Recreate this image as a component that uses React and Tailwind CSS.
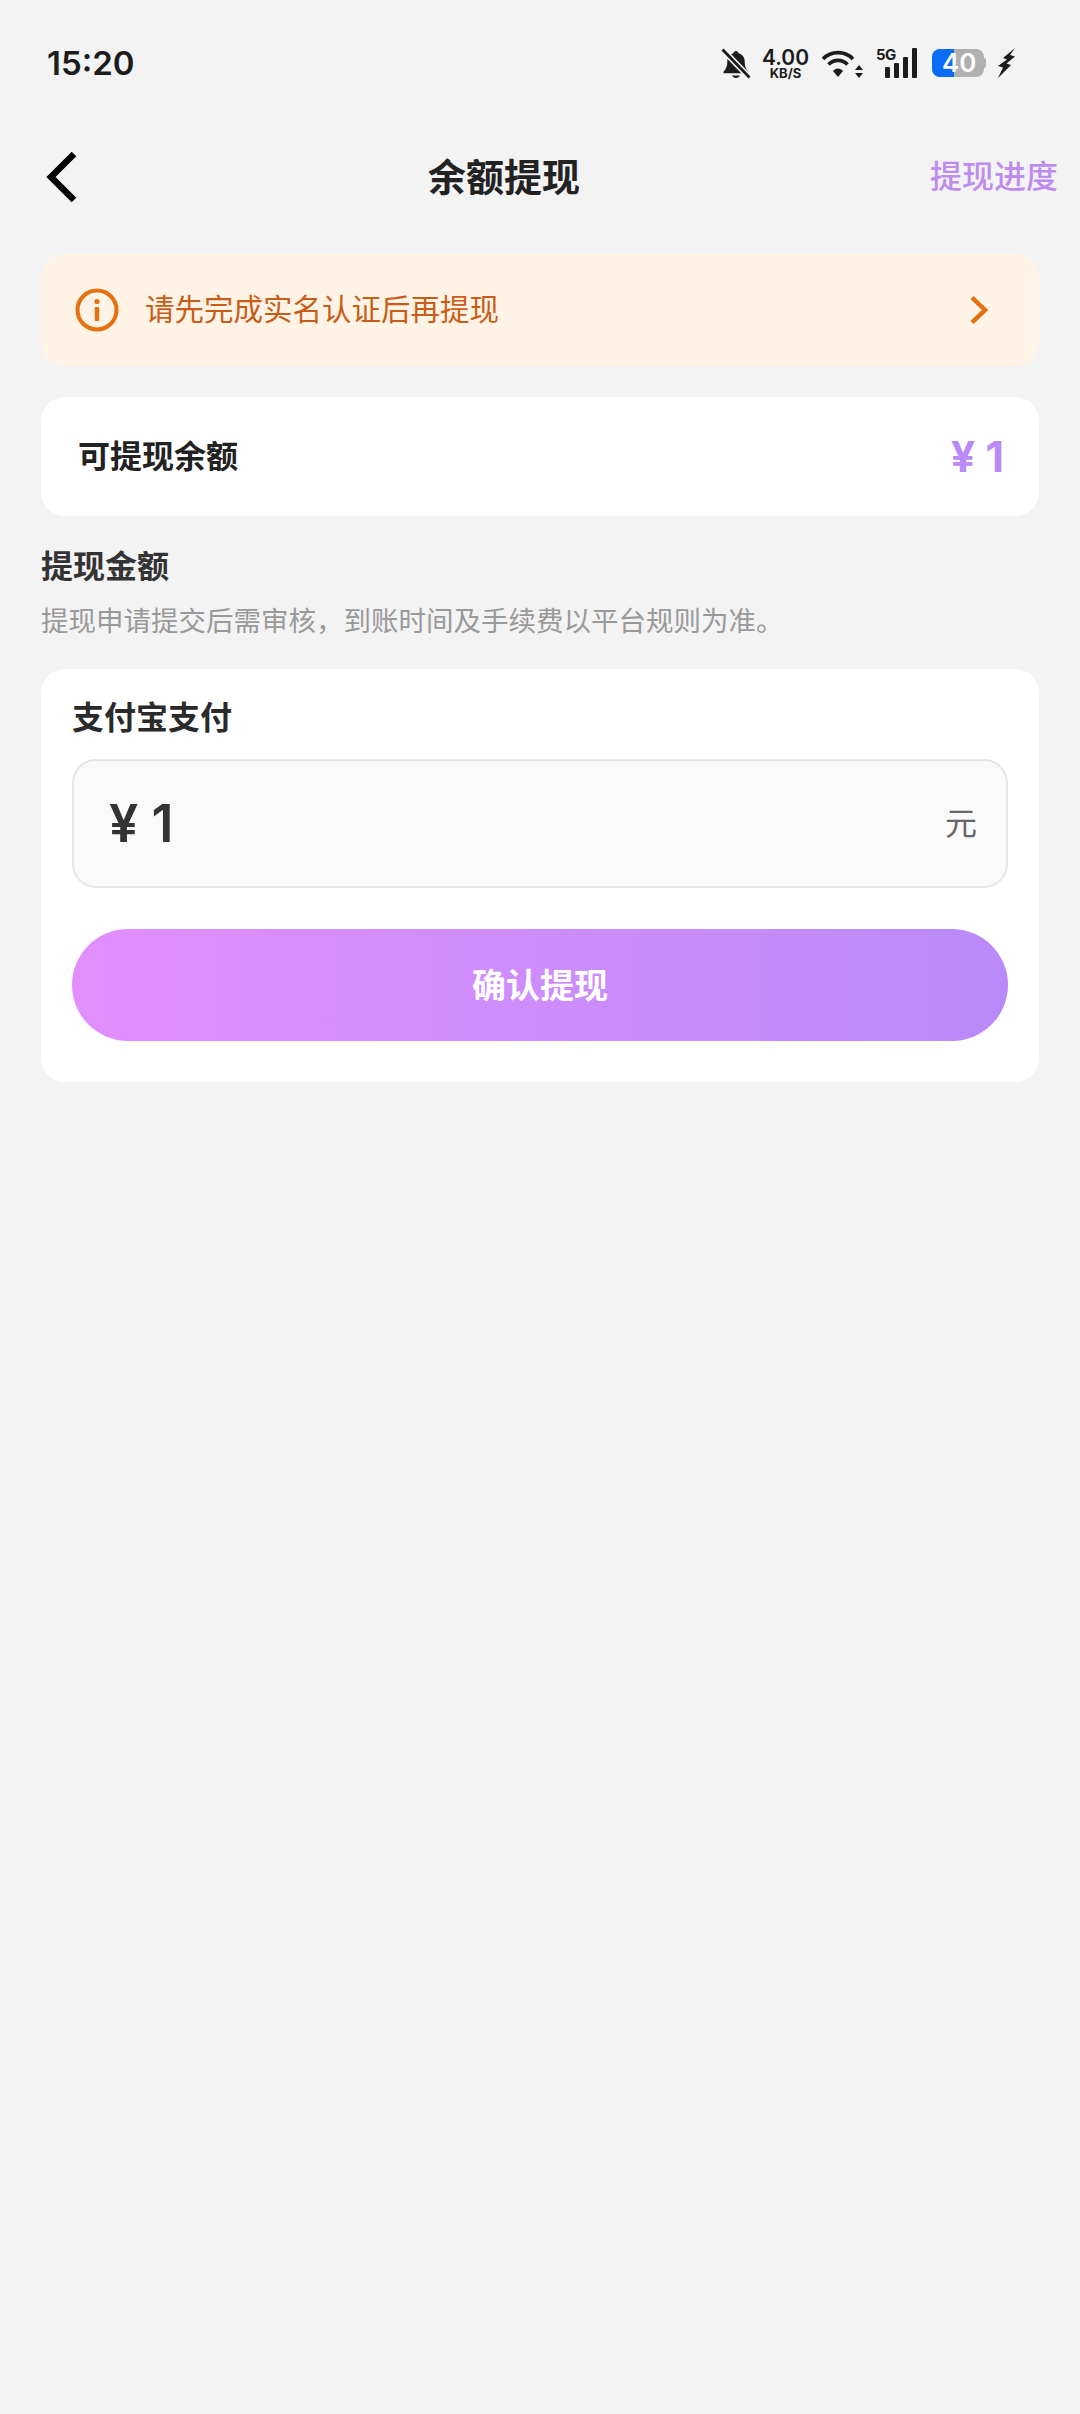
const fontStack = "font-['Inter','Noto_Sans_CJK_SC',sans-serif]"

function StatusBar() {
  return (
    <div className="flex h-[126px] items-center pl-[47px] pr-[64px]">
      <span className="text-[33px] font-semibold leading-none text-[#1c1c1c]">15:20</span>
      <div className="ml-auto flex items-center">
        {/* muted bell */}
        <svg width="30" height="31" viewBox="0 0 30 31" className="mt-[1px]">
          <path d="M15 3c1.4 0 2.4 1 2.5 2.2 4 1 6.2 4.3 6.2 8.3 0 4 .8 7.4 3.6 10.2v1.6H2.5v-1.6C5.4 21 6.3 17.5 6.3 13.5c0-4 2.200-7.300 6.200-8.300C12.600 4 13.600 3 15 3z" fill="#1c1c1c" />
          <path d="M11 27.500h8c-.6 1.500-2.200 2.500-4 2.500s-3.400-1-4-2.500z" fill="#1c1c1c" />
          <path d="M1.500 1.500 28.500 29.500" stroke="#f3f3f4" strokeWidth="6" />
          <path d="M1.500 1.500 28.500 29.500" stroke="#1c1c1c" strokeWidth="2.800" />
        </svg>
        {/* speed */}
        <div className="ml-[9px] flex w-[51px] flex-col items-center">
          <span className="h-[19px] text-[21px] font-semibold leading-[19px] text-[#1c1c1c]">4.00</span>
          <span className="mt-[1px] h-[11px] text-[13px] font-bold leading-[11px] text-[#1c1c1c]">KB/S</span>
        </div>
        {/* wifi */}
        <svg width="42" height="32" viewBox="0 0 42 32" className="ml-[10px]">
          <path d="M2 12C10 3.500 24 3.500 32 12" fill="none" stroke="#1c1c1c" strokeWidth="3.600" />
          <path d="M7.500 17.500C12.500 12 21.500 12 26.500 17.500" fill="none" stroke="#1c1c1c" strokeWidth="3.600" />
          <path d="M12 24c2.500-3.500 7.500-3.500 10 0l-5 6z" fill="#1c1c1c" />
          <path d="M38 18l4 5h-8zM38 31l4-5h-8z" fill="#1c1c1c" />
        </svg>
        {/* 5G signal */}
        <div className="relative ml-[13px] h-[32px] w-[41px]">
          <span className="absolute left-0 top-0 text-[15px] font-bold leading-[15px] tracking-[-0.5px] text-[#1c1c1c]">5G</span>
          <svg width="41" height="32" viewBox="0 0 41 32" className="absolute left-0 top-0">
            <rect x="9" y="20" width="5" height="11" rx="1" fill="#1c1c1c" />
            <rect x="18" y="16" width="5" height="15" rx="1" fill="#1c1c1c" />
            <rect x="27" y="10" width="5" height="21" rx="1" fill="#1c1c1c" />
            <rect x="36" y="1" width="5" height="30" rx="1" fill="#1c1c1c" />
          </svg>
        </div>
        {/* battery */}
        <div className="relative ml-[15px] h-[28px] w-[54px]">
          <div className="flex h-full w-[52px] overflow-hidden rounded-[8px] bg-[#b0b0b0]">
            <div className="h-full w-[22px] bg-[#0a6cf5]" />
          </div>
          <div className="absolute right-0 top-[9px] h-[10px] w-[2px] rounded-r-sm bg-[#b0b0b0]" />
          <span className="absolute left-[10px] top-0 text-[26px] font-semibold leading-[28px] text-white">40</span>
        </div>
        {/* charging bolt */}
        <svg width="19" height="32" viewBox="0 0 19 32" className="ml-[11px]">
          <path d="M18 1 6 11l4 1.500L1 19l5 1.500L1 31l13-13-4.500-1.500L18 9.500l-5-1.500z" fill="#1c1c1c" />
        </svg>
      </div>
    </div>
  )
}

function Header() {
  return (
    <div className="flex h-[102px] items-center justify-between pl-[46px] pr-[22px]">
      <svg width="32" height="52" viewBox="0 0 32 52">
        <path d="M28 3 5 26l23 23" fill="none" stroke="#000" strokeWidth="6.500" />
      </svg>
      <h1 className="text-[38px] font-bold leading-none text-[#222]">余额提现</h1>
      <span className="text-[32px] font-medium leading-none text-[#bd8cee]">提现进度</span>
    </div>
  )
}

export default function App() {
  return (
    <div className={`min-h-[2414px] bg-[#f3f3f4] ${fontStack}`}>
      <StatusBar />
      <Header />

      <div className="mx-[41px] mt-[26px]">
        {/* Realname notice */}
        <div className="flex h-[112px] items-center rounded-[24px] bg-[#fff3e6] pl-[34px] pr-[50px]">
          <svg width="44" height="44" viewBox="0 0 44 44">
            <circle cx="22" cy="22" r="19.500" fill="none" stroke="#e5700f" strokeWidth="4" />
            <circle cx="22" cy="13.500" r="2.600" fill="#e5700f" />
            <rect x="19.800" y="19" width="4.400" height="14" rx="1" fill="#e5700f" />
          </svg>
          <span className="ml-[26px] text-[29.500px] leading-none text-[#c95c17]">请先完成实名认证后再提现</span>
          <svg width="20" height="30" viewBox="0 0 20 30" className="ml-auto">
            <path d="M3 2.500 16 15 3 27.500" fill="none" stroke="#e5700f" strokeWidth="4.500" />
          </svg>
        </div>

        {/* Balance */}
        <div className="mt-[31px] flex h-[119px] items-center justify-between rounded-[24px] bg-white pl-[37px] pr-[35px]">
          <span className="text-[32px] font-bold leading-none text-[#222]">可提现余额</span>
          <span className="text-[43px] font-bold leading-none text-[#b98af8]">¥ 1</span>
        </div>

        <h2 className="mt-[31px] text-[32px] font-bold leading-[40px] text-[#333]">提现金额</h2>
        <p className="mt-[14px] text-[27.500px] leading-[40px] text-[#999]">提现申请提交后需审核，到账时间及手续费以平台规则为准。</p>

        {/* Withdraw form */}
        <div className="mt-[28px] rounded-[24px] bg-white px-[31px] pb-[41px] pt-[29px]">
          <div className="text-[32px] font-bold leading-[40px] text-[#2a2a2a]">支付宝支付</div>
          <div className="mt-[21px] flex h-[129px] items-center justify-between rounded-[24px] border-2 border-[#e6e6e6] bg-[#fafafa] pl-[35px] pr-[29px]">
            <span className="text-[52px] font-semibold leading-none text-[#333]">¥ 1</span>
            <span className="text-[32px] leading-none text-[#666]">元</span>
          </div>
          <button className="mt-[41px] flex h-[112px] w-full items-center justify-center rounded-full bg-gradient-to-r from-[#e28eff] to-[#b98af8] text-[34px] font-bold text-white">
            确认提现
          </button>
        </div>
      </div>
    </div>
  )
}
